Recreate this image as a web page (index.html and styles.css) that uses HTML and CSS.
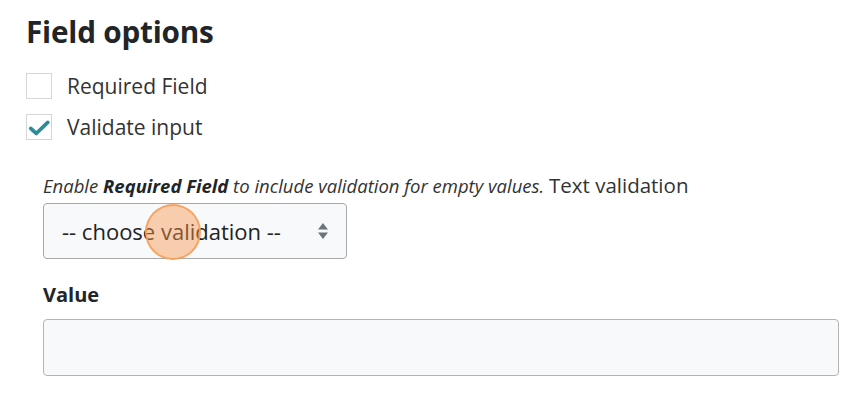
FILE: index.html
```html
<!DOCTYPE html>
<html lang="en">
<head>
  <meta charset="UTF-8" />
  <title>Field options</title>
  <link rel="stylesheet" href="styles.css">
</head>
<body>
  <div class="panel">
    <h2 class="panel-title">Field options</h2>

    <label class="check-row">
      <span class="box"></span>
      <span class="check-label">Required Field</span>
    </label>
    <label class="check-row">
      <span class="box">
        <svg viewBox="0 0 26 26" width="26" height="26"><path d="M4 14.5 L10 20 L22.5 8" fill="none" stroke="#2a8c99" stroke-width="4" stroke-linecap="round" stroke-linejoin="round"/></svg>
      </span>
      <span class="check-label">Validate input</span>
    </label>

    <div class="validation">
      <p class="hint"><em>Enable <strong>Required Field</strong> to include validation for empty values.</em> <span class="hint-label">Text validation</span></p>
      <div class="select-wrap">
        <div class="select">
          <span>-- choose validation --</span>
          <svg class="arrows" viewBox="0 0 12 20" width="12" height="20"><path d="M6 2 L11 8.5 H1 Z M6 18 L11 11.5 H1 Z" fill="#6c757d"/></svg>
        </div>
        <span class="click-dot"></span>
      </div>

      <div class="value-label">Value</div>
      <div class="value-input"></div>
    </div>
  </div>
</body>
</html>
```

FILE: styles.css
```css
body {
  margin: 0;
  background: #fff;
  color: #212529;
  font-family: "Open Sans", "Noto Sans", Arial, sans-serif;
}
.panel {
  padding: 12px 21px 0 26px;
}
.panel-title {
  font-size: 29.7px;
  font-weight: 700;
  margin: 0 0 21px 0;
  line-height: 40px;
  letter-spacing: -0.2px;
}
.check-row {
  display: flex;
  align-items: center;
  gap: 15px;
  height: 26px;
  margin-bottom: 15px;
}
.box {
  width: 24px;
  height: 24px;
  border: 1px solid #d6d6d6;
  background: #fff;
  display: flex;
  align-items: center;
  justify-content: center;
}
.box svg {
  display: block;
}
.check-label {
  font-size: 21px;
  color: #333;
}
.validation {
  margin-left: 17px;
  padding-top: 18px;
}
.hint {
  margin: 0 0 5px 0;
  font-size: 18.5px;
  line-height: 24px;
  color: #333;
  white-space: nowrap;
}
.hint strong {
  color: #212529;
}
.hint-label {
  font-size: 20.5px;
  color: #333;
}
.select-wrap {
  position: relative;
  width: 304px;
}
.select {
  box-sizing: border-box;
  height: 56px;
  border: 1px solid #a8a8a8;
  border-radius: 4px;
  background: #f8f9fa;
  display: flex;
  align-items: center;
  justify-content: space-between;
  padding: 0 17px 0 18px;
  font-size: 22px;
  color: #222;
}
.arrows {
  display: block;
}
.click-dot {
  position: absolute;
  left: 102px;
  top: 1px;
  width: 52px;
  height: 52px;
  border-radius: 50%;
  background: rgba(247, 150, 80, 0.45);
  border: 2px solid rgba(246, 160, 90, 0.9);
}
.value-label {
  font-size: 20px;
  font-weight: 700;
  line-height: 27px;
  margin: 22px 0 11px 0;
  color: #212529;
}
.value-input {
  box-sizing: border-box;
  height: 57px;
  border: 1px solid #b4b4b4;
  border-radius: 4px;
  background: #f8f9fa;
}
```
